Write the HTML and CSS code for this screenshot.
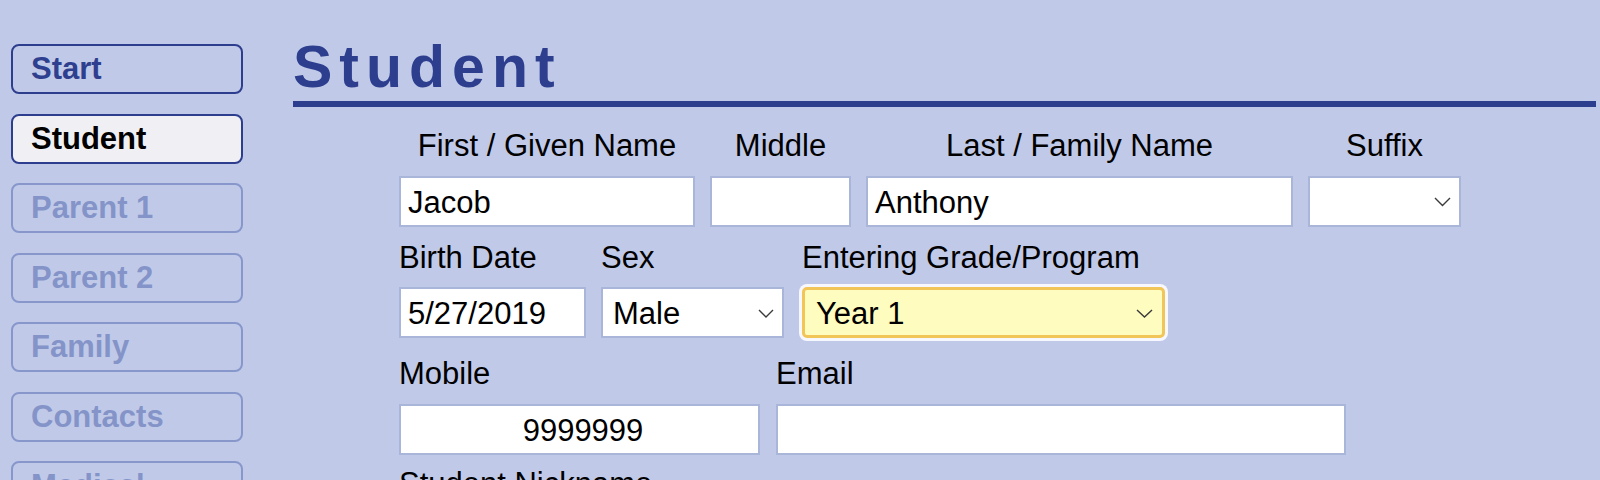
FILE: index.html
```html
<!DOCTYPE html>
<html lang="en">
<head>
<meta charset="utf-8">
<title>Student</title>
<link rel="stylesheet" href="styles.css">
</head>
<body>
<div class="page">
  <nav class="sidebar">
    <div class="navbtn nav-active">Start</div>
    <div class="navbtn nav-current">Student</div>
    <div class="navbtn nav-off">Parent 1</div>
    <div class="navbtn nav-off">Parent 2</div>
    <div class="navbtn nav-off">Family</div>
    <div class="navbtn nav-off">Contacts</div>
    <div class="navbtn nav-off">Medical</div>
  </nav>
  <main class="content">
    <h1 class="title">Student</h1>
    <div class="form">
      <div class="row row1">
        <div class="field w-first centered">
          <div class="lbl">First / Given Name</div>
          <div class="box">Jacob</div>
        </div>
        <div class="field w-middle centered">
          <div class="lbl">Middle</div>
          <div class="box"></div>
        </div>
        <div class="field w-last centered">
          <div class="lbl">Last / Family Name</div>
          <div class="box">Anthony</div>
        </div>
        <div class="field w-suffix centered">
          <div class="lbl">Suffix</div>
          <div class="box select"><span></span><svg class="chev" width="17" height="10" viewBox="0 0 17 10"><polyline points="1,1 8.5,8.5 16,1" fill="none" stroke="#3a3a3a" stroke-width="1.4"/></svg></div>
        </div>
      </div>
      <div class="row row2">
        <div class="field w-birth">
          <div class="lbl">Birth Date</div>
          <div class="box">5/27/2019</div>
        </div>
        <div class="field w-sex">
          <div class="lbl">Sex</div>
          <div class="box select"><span>Male</span><svg class="chev" width="16" height="9" viewBox="0 0 16 9"><polyline points="1,1 8,8 15,1" fill="none" stroke="#3a3a3a" stroke-width="1.4"/></svg></div>
        </div>
        <div class="field w-grade">
          <div class="lbl">Entering Grade/Program</div>
          <div class="box select focus"><span>Year 1</span><svg class="chev" width="17" height="9" viewBox="0 0 17 9"><polyline points="1,1 8.5,8 16,1" fill="none" stroke="#3a3a3a" stroke-width="1.4"/></svg></div>
        </div>
      </div>
      <div class="row row3">
        <div class="field w-mobile">
          <div class="lbl">Mobile</div>
          <div class="box centered-text">9999999</div>
        </div>
        <div class="field w-email">
          <div class="lbl">Email</div>
          <div class="box"></div>
        </div>
      </div>
      <div class="row row4">
        <div class="field">
          <div class="lbl">Student Nickname</div>
        </div>
      </div>
    </div>
  </main>
</div>
</body>
</html>
```

FILE: styles.css
```css
html, body {
  margin: 0;
  padding: 0;
  background: #c0cae8;
  height: 100%;
  overflow: hidden;
}
body {
  font-family: "Liberation Sans", Arial, sans-serif;
  color: #000;
}
.page {
  display: flex;
  align-items: flex-start;
}
.sidebar {
  width: 232px;
  margin-left: 11px;
  padding-top: 44px;
  display: flex;
  flex-direction: column;
  gap: 19.5px;
  flex-shrink: 0;
}
.navbtn {
  box-sizing: border-box;
  height: 50px;
  border: 2px solid #2e3e8f;
  border-radius: 8px;
  padding-left: 18px;
  font-size: 31px;
  font-weight: bold;
  line-height: 46px;
  white-space: nowrap;
}
.nav-active {
  color: #2f3f8f;
}
.nav-current {
  background: #f0f0f4;
  color: #000;
}
.nav-off {
  color: #8494c9;
  border-color: #8797cc;
}
.content {
  flex: 1;
  margin-left: 50px;
  margin-right: 4px;
}
.title {
  margin: 38px 0 0 0;
  font-size: 59px;
  line-height: 59px;
  font-weight: bold;
  letter-spacing: 7px;
  color: #2d3e8e;
  padding-bottom: 4px;
  border-bottom: 6px solid #2d3e8e;
}
.form {
  margin-left: 106px;
}
.row {
  display: flex;
  align-items: flex-start;
}
.row1 { margin-top: 22px; gap: 15px; }
.row2 { margin-top: 14px; gap: 15px; }
.row3 { margin-top: 19px; gap: 16px; }
.row4 { margin-top: 12px; }
.field {
  display: flex;
  flex-direction: column;
}
.lbl {
  font-size: 31px;
  line-height: 34px;
  margin-bottom: 12.5px;
  white-space: nowrap;
}
.centered .lbl {
  text-align: center;
}
.box {
  box-sizing: border-box;
  height: 51px;
  background: #fff;
  border: 2px solid #aab5da;
  font-size: 31px;
  line-height: 45px;
  padding-top: 2px;
  padding-left: 7px;
  white-space: nowrap;
}
.centered-text {
  text-align: center;
}
.select {
  display: flex;
  align-items: center;
  justify-content: space-between;
  padding-right: 8px;
  padding-left: 10px;
}
.chev {
  flex-shrink: 0;
}
.focus {
  background: #fffcbf;
  border: 3px solid #f2c558;
  border-radius: 5px;
  box-shadow: 0 0 0 3px #f7f8fd;
  padding-left: 11px;
  padding-right: 9px;
}
.w-first { width: 296px; }
.w-middle { width: 141px; }
.w-last { width: 427px; }
.w-suffix { width: 153px; }
.w-birth { width: 187px; }
.w-sex { width: 183px; }
.w-grade { width: 363px; margin-left: 3px; }
.w-mobile { width: 361px; }
.w-email { width: 570px; }
```
